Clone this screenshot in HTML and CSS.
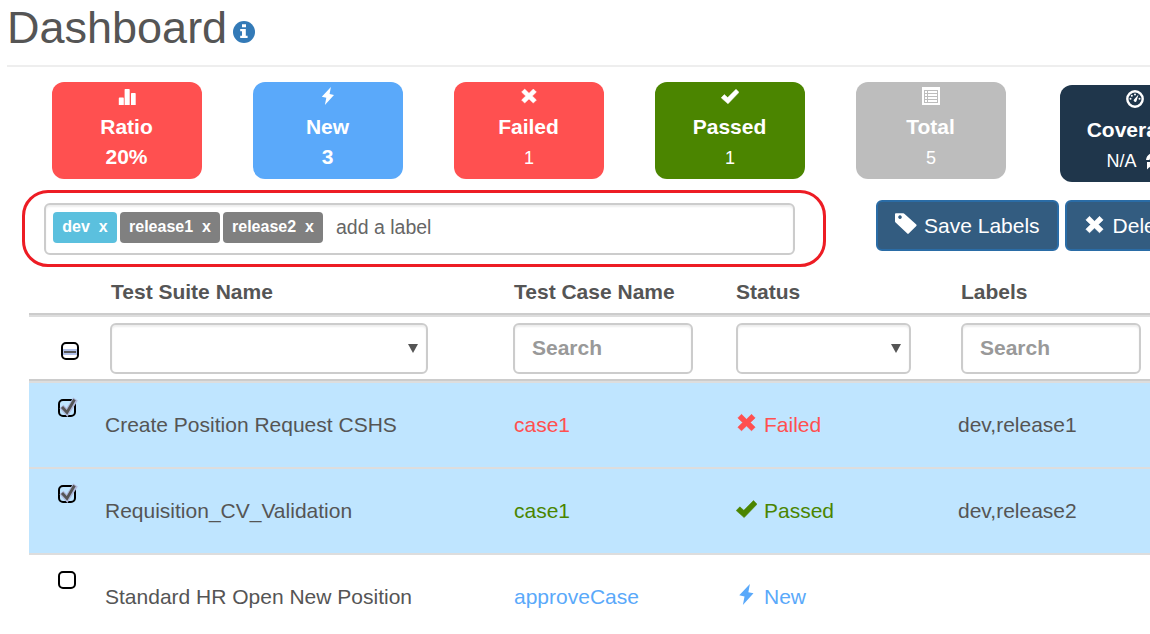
FILE: index.html
```
<!DOCTYPE html>
<html lang="en">
<head>
<meta charset="utf-8">
<title>Dashboard</title>
<link rel="stylesheet" href="styles.css">
</head>
<body>
<svg class="sprite" aria-hidden="true">
  <symbol id="i-bars" viewBox="0 0 18 18"><path d="M.8 11.200q0-.7.7-.7h3.600q.7 0 .7.700V18H.8zM6.600 2.700q0-.7.7-.7h3.700q.7 0 .7.700V18H6.600zM13 6.700q0-.7.7-.7h3.300q.7 0 .7.700V18H13z"/></symbol>
  <symbol id="i-bolt" viewBox="0 0 18 18"><path d="M11.900 0 10.600 7.100 15 8 5.900 18 7.300 10.700 2.800 9.700z"/></symbol>
  <symbol id="i-x" viewBox="0 0 18 18"><path d="M4.700 2 9 6.300 13.300 2 16.400 5.100 12.300 9 16.400 13 13.300 16.100 9 11.900 4.700 16.100 1.600 13 5.700 9 1.600 5.100z" stroke="currentColor" stroke-width=".5" stroke-linejoin="round"/></symbol>
  <symbol id="i-check" viewBox="0 0 18 18"><path d="M.2 10.800 3.300 7.600 6.700 10.600 15 2.200 18 5.300 7 16.800z" stroke="currentColor" stroke-width=".5" stroke-linejoin="round"/></symbol>
  <symbol id="i-list" viewBox="0 0 18 18"><path fill-rule="evenodd" d="M0 0h18v18H0zM2 3v13h14V3zM3 4h2v2H3zM6 4h9v2H6zM3 7h2v2H3zM6 7h9v2H6zM3 10h2v2H3zM6 10h9v2H6zM3 13h2v2H3zM6 13h9v2H6z"/></symbol>
  <symbol id="i-gauge" viewBox="0 0 18 18"><circle cx="9" cy="9" r="7.700" fill="none" stroke="currentColor" stroke-width="2.400"/><path d="M8 9.500 12.500 4.500 10.700 10.600A1.500 1.500 0 1 1 8 9.500z"/><circle cx="4.500" cy="8.800" r="1"/><circle cx="5.800" cy="5.800" r="1"/><circle cx="9" cy="4.500" r="1"/><circle cx="13.500" cy="8.800" r="1"/></symbol>
  <symbol id="i-refresh" viewBox="0 0 18 18"><path d="M0 8A8.500 8.500 0 0 1 14.500 3L17 .5V8H9.500l2.600-2.600A5 5 0 0 0 3.500 8zM18 10A8.500 8.500 0 0 1 3.500 15L1 17.500V10h7.500l-2.600 2.600A5 5 0 0 0 14.500 10z"/></symbol>
  <symbol id="i-tag" viewBox="0 0 22 22"><path fill-rule="evenodd" d="M0 1.200Q0 .3.900.3H8.200Q9 .3 9.600.9L21.300 11.500Q22 12.200 21.300 12.900L13.700 20.600Q13 21.200 12.300 20.600L.6 9.500Q0 9 0 8.200zM5 2.300a1.800 1.800 0 1 0 .01 0z"/></symbol>
  <symbol id="i-tick" viewBox="0 0 24 24"><path d="M4.500 11.500 10 17.500 18.500 4" fill="none" stroke="#b0b9dc" stroke-width="5.500"/><path d="M5 12 10 17.500 17.500 4.500" fill="none" stroke="#555" stroke-width="2.800"/></symbol>
</svg>

<header class="page-header">
  <h1 class="title">Dashboard</h1>
  <svg class="info" viewBox="0 0 22 22"><circle cx="11" cy="11" r="11" fill="#337ab7"/><path d="M9 3.200h4v3H9zM7.200 8h5.600v6.800h1.800V17H7.200v-2.200H9v-4.600H7.200z" fill="#fff"/></svg>
</header>

<section class="cards">
  <div class="card red"><svg class="icon"><use href="#i-bars"/></svg><b class="name">Ratio</b><b class="name">20%</b></div>
  <div class="card blue"><svg class="icon"><use href="#i-bolt"/></svg><b class="name">New</b><b class="name">3</b></div>
  <div class="card red"><svg class="icon"><use href="#i-x"/></svg><b class="name">Failed</b><span class="count">1</span></div>
  <div class="card green"><svg class="icon"><use href="#i-check"/></svg><b class="name">Passed</b><span class="count">1</span></div>
  <div class="card gray"><svg class="icon"><use href="#i-list"/></svg><b class="name">Total</b><span class="count">5</span></div>
  <div class="card navy"><svg class="icon"><use href="#i-gauge"/></svg><b class="name">Coverage</b><span class="count">N/A <svg class="refresh"><use href="#i-refresh"/></svg></span></div>
</section>

<section class="toolbar">
  <div class="highlight">
    <div class="labels-input">
      <span class="tag info-tag">dev<span>x</span></span>
      <span class="tag">release1<span>x</span></span>
      <span class="tag">release2<span>x</span></span>
      <span class="placeholder">add a label</span>
    </div>
  </div>
  <div class="buttons">
    <div class="btn"><svg class="btn-tag"><use href="#i-tag"/></svg>Save Labels</div>
    <div class="btn"><svg class="btn-x"><use href="#i-x"/></svg>Delete Labels</div>
  </div>
</section>

<main class="table">
  <div class="head">
    <span></span><span>Test Suite Name</span><span>Test Case Name</span><span>Status</span><span>Labels</span>
  </div>
  <div class="filters">
    <span class="box all"><i class="dash"></i></span>
    <div class="field suite"><i class="arrow"></i></div>
    <div class="field search">Search</div>
    <div class="field status-select"><i class="arrow"></i></div>
    <div class="field search">Search</div>
  </div>
  <div class="row selected">
    <span class="box"><svg class="tick"><use href="#i-tick"/></svg></span>
    <span class="cell">Create Position Request CSHS</span>
    <span class="cell t-red">case1</span>
    <span class="cell state t-red"><svg><use href="#i-x"/></svg>Failed</span>
    <span class="cell">dev,release1</span>
  </div>
  <div class="row selected">
    <span class="box"><svg class="tick"><use href="#i-tick"/></svg></span>
    <span class="cell">Requisition_CV_Validation</span>
    <span class="cell t-green">case1</span>
    <span class="cell state t-green"><svg><use href="#i-check"/></svg>Passed</span>
    <span class="cell">dev,release2</span>
  </div>
  <div class="row">
    <span class="box"></span>
    <span class="cell">Standard HR Open New Position</span>
    <span class="cell t-blue">approveCase</span>
    <span class="cell state t-blue"><svg><use href="#i-bolt"/></svg>New</span>
    <span class="cell"></span>
  </div>
</main>
</body>
</html>
```
FILE: styles.css
```
* { box-sizing: border-box; }
html, body { height: 634px; overflow: hidden; }
body {
  margin: 0;
  background: #fff;
  color: #555;
  font: 21px/30px "Liberation Sans", Arial, sans-serif;
  white-space: nowrap;
}
svg { fill: currentColor; flex: none; overflow: visible; }
.sprite { display: none; }

.page-header {
  display: flex;
  height: 67px;
  margin-left: 7px;
  border-bottom: 2px solid #eee;
}
.title { margin: 3px 0 0; font-size: 45px; line-height: 50px; font-weight: 400; }
.info { width: 22px; height: 22px; margin: 21px 0 0 6px; }

.cards { display: flex; gap: 51px; padding: 15px 0 0 52px; height: 123px; width: 1300px; }
.card {
  display: flex;
  flex-direction: column;
  align-items: center;
  flex: none;
  width: 150px;
  height: 97px;
  padding-top: 5px;
  border-radius: 12px;
  color: #fff;
}
.icon { width: 18px; height: 18px; margin-bottom: 7px; }
.name { display: block; margin-left: -1px; }
.count { display: flex; align-items: center; gap: 9px; font-size: 18px; padding-top: 1px; }
.refresh { width: 18px; height: 18px; }
.red { background: #ff5050; }
.blue { background: #5aa9fa; }
.green { background: #4b8500; }
.gray { background: #bdbdbd; }
.navy { background: #1f364b; margin: 3px 0 0 3px; }

.toolbar { display: flex; align-items: flex-start; width: 1400px; padding-left: 22px; height: 77px; }
.highlight {
  width: 804px;
  height: 77px;
  padding: 10px 28px 9px 19px;
  border: 3px solid #ed1c24;
  border-radius: 26px;
}
.labels-input {
  display: flex;
  gap: 3px;
  height: 52px;
  width: 751px;
  padding: 7px;
  border: 2px solid #ccc;
  border-radius: 6px;
  box-shadow: inset 0 2px 2px rgba(0, 0, 0, .07);
}
.tag {
  display: flex;
  justify-content: center;
  gap: 9px;
  width: 100px;
  height: 31px;
  border-radius: 4px;
  background: #808080;
  color: #fff;
  font-size: 16px;
  font-weight: 700;
}
.info-tag { width: 64px; background: #5bc0de; }
.placeholder { margin-left: 10px; font-size: 19.5px; color: #666; }
.buttons { display: flex; gap: 6px; margin: 10px 0 0 50px; }
.btn {
  display: flex;
  height: 51px;
  padding: 9px 17px 0;
  border: 2px solid #2a6ca6;
  border-radius: 6px;
  background: #335c80;
  color: #fff;
}
.btn-tag { width: 22px; height: 22px; margin: 2px 7px 0 0; }
.btn-x { width: 21px; height: 21px; margin: 3px 8px 0 0; }

.table { width: 1300px; margin-left: 29px; }
.head, .filters { display: grid; grid-template-columns: 81px 403px 223px 225px 200px; }
.head { height: 46px; padding-top: 10px; font-weight: 700; }
.head span:nth-child(2), .head span:nth-child(3) { padding-left: 1px; }
.filters {
  height: 70px;
  padding-top: 6px;
  border-top: 4px solid #ccc;
  border-bottom: 4px solid #ccc;
  border-image: linear-gradient(#ccc 2px, #ddd 2px, #ddd 4px, transparent 4px, transparent calc(100% - 4px), #ccc calc(100% - 4px), #ccc calc(100% - 2px), #ddd calc(100% - 2px)) 4 0;
}
.field {
  display: flex;
  height: 51px;
  border: 2px solid #ccc;
  border-radius: 6px;
  background: #fff;
  box-shadow: inset 0 2px 2px rgba(0, 0, 0, .07);
}
.suite { width: 318px; }
.status-select { width: 175px; }
.suite, .status-select { justify-content: flex-end; align-items: center; padding-right: 8px; }
.search { width: 180px; padding: 8px 17px; color: #999; font-weight: 700; }
.arrow { border: 5px solid transparent; border-top: 9px solid #555; border-bottom: 0; }

.row {
  display: grid;
  grid-template-columns: 76px 409px 222px 222px 300px;
  height: 86px;
  border-bottom: 2px solid #ddd;
}
.selected { background: #bfe5ff; }
.cell { padding-top: 27px; }
.state { display: flex; }
.state svg { width: 21px; height: 21px; margin: 2px 7px 0 0; }
.box {
  display: block;
  width: 18px;
  height: 18px;
  margin: 16px 0 0 29px;
  border: 2px solid #000;
  border-radius: 5px;
}
.all { margin: 19px 0 0 32px; padding-top: 5px; }
.dash { display: block; height: 6px; border: solid #b0bfe8; border-width: 2px 1px; background: #555; }
.tick { display: block; width: 24px; height: 24px; margin: -6px 0 0 -3px; }
.t-red { color: #ff5050; }
.t-green { color: #4b8500; }
.t-blue { color: #5aa9fa; }
```
